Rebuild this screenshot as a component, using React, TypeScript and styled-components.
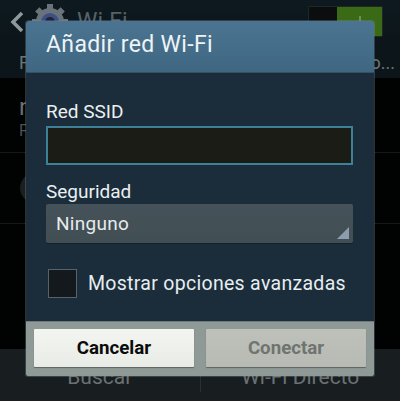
import React, { FC } from "react";
import styled, { createGlobalStyle } from "styled-components";

const GlobalStyle = createGlobalStyle`
  html, body {
    margin: 0;
    padding: 0;
    background: #000;
  }
  body {
    font-family: Roboto, "Noto Sans", sans-serif;
  }
`;

const Screen = styled.div`
  position: relative;
  display: flex;
  flex-direction: column;
  width: 400px;
  height: 401px;
  overflow: hidden;
  background: #010202;
`;

const ActionBar = styled.header`
  display: flex;
  align-items: center;
  height: 47px;
  padding: 0 17px 4px 10px;
  box-sizing: border-box;
  background: linear-gradient(#0e1a20, #0b1419);
`;

const BarTitle = styled.span`
  margin-left: 9px;
  font-size: 23px;
  color: #566266;
`;

const Toggle = styled.div`
  display: flex;
  width: 75px;
  height: 31px;
  margin-left: auto;
  padding: 1px;
  box-sizing: border-box;
  background: #1c2a25;
  border-radius: 2px;
`;

const ToggleOff = styled.div`
  flex: 1;
  background: #0c0d0e;
`;

const ToggleOn = styled.div`
  display: flex;
  flex: 0 0 45px;
  align-items: center;
  justify-content: center;
  background: #3b6a17;
`;

const ToggleMark = styled.i`
  width: 2px;
  height: 12px;
  background: #6b8f55;
`;

const TabStrip = styled.div`
  display: flex;
  justify-content: space-between;
  align-items: center;
  height: 31px;
  padding: 0 5px 0 19px;
  font-size: 18px;
  color: #6d7577;
  background: #0c1519;
`;

const List = styled.div`
  flex: 1;
  display: flex;
  flex-direction: column;
`;

const ListRow = styled.div<{ $height: number }>`
  display: flex;
  flex-direction: column;
  height: ${(p) => p.$height}px;
  padding-left: 19px;
  box-sizing: border-box;
  border-bottom: 1px solid #15191b;
`;

const RowTitle = styled.span`
  margin-top: 15px;
  font-size: 24px;
  line-height: 28px;
  color: #6c7072;
`;

const RowSub = styled.span`
  font-size: 16px;
  line-height: 19px;
  color: #4d5254;
`;

const RoundIcon = styled.span`
  width: 30px;
  height: 30px;
  margin: 20px 0 0 1px;
  border-radius: 50%;
  background: #1c1f20;
`;

const BottomBar = styled.footer`
  display: flex;
  height: 52px;
  background: #181d20;
`;

const BottomItem = styled.div`
  flex: 1;
  display: flex;
  justify-content: center;
  padding-top: 16px;
  font-size: 21px;
  color: #6b7173;
  & + & {
    border-left: 1px solid #2a3033;
    margin: 0 0 9px;
  }
`;

const Dialog = styled.section`
  position: absolute;
  top: 21px;
  left: 26px;
  display: flex;
  flex-direction: column;
  width: 348px;
  height: 355px;
  border-radius: 3px 3px 2px 2px;
  overflow: hidden;
  box-shadow: 0 0 0 1px rgba(120, 140, 150, 0.35);
`;

const DialogHeader = styled.h1`
  display: flex;
  align-items: center;
  flex: 0 0 52px;
  margin: 0;
  padding: 0 0 4px 20px;
  box-sizing: border-box;
  font-size: 23px;
  font-weight: 400;
  letter-spacing: 0.35px;
  color: #eef4f6;
  background: linear-gradient(#4a7491, #3f6782);
  border-bottom: 1px solid #345064;
`;

const DialogBody = styled.div`
  flex: 1;
  display: flex;
  flex-direction: column;
  padding: 27px 21px 0 20px;
  background: #1b2c3b;
`;

const FieldLabel = styled.label`
  font-size: 19px;
  line-height: 24px;
  color: #eaf0f1;
`;

const SsidInput = styled.div`
  height: 39px;
  margin: 2px 0 15px;
  box-sizing: border-box;
  background: #1b1c16;
  border: 2px solid #3d8199;
`;

const Select = styled.div`
  position: relative;
  height: 39px;
  padding: 0 10px;
  display: flex;
  align-items: center;
  font-size: 19px;
  letter-spacing: 0.3px;
  color: #e6ebec;
  background: linear-gradient(#465259, #414e53);
  border-radius: 2px;
  box-shadow: 0 1px 0 #14222c;
`;

const SelectCorner = styled.span`
  position: absolute;
  right: 4px;
  bottom: 4px;
  width: 12px;
  height: 12px;
  background: #8c9db0;
  clip-path: polygon(100% 0, 100% 100%, 0 100%);
`;

const CheckRow = styled.div`
  display: flex;
  align-items: center;
  gap: 11px;
  margin-top: 26px;
  padding-left: 2px;
  font-size: 19.5px;
  letter-spacing: 0.3px;
  white-space: nowrap;
  color: #e6eef0;
`;

const CheckBox = styled.span`
  flex: none;
  width: 29px;
  height: 29px;
  box-sizing: border-box;
  background: #14191d;
  border: 1px solid #56636a;
`;

const DialogActions = styled.div`
  display: flex;
  gap: 12px;
  flex: 0 0 54px;
  padding: 7px 8px 9px;
  box-sizing: border-box;
  background: #8f9996;
  border-top: 1px solid #6f7a7a;
`;

const ActionButton = styled.button<{ $enabled?: boolean }>`
  flex: 1;
  height: 38px;
  padding: 0;
  border: 0;
  border-radius: 1px;
  font-family: inherit;
  font-size: 18.7px;
  font-weight: 700;
  color: ${(p) => (p.$enabled ? "#0a0b0b" : "#6f7470")};
  background: ${(p) =>
    p.$enabled
      ? "linear-gradient(#f3f5f0, #e9ebe6)"
      : "linear-gradient(#bdc1ba, #b7bbb4)"};
  box-shadow: 0 1px 1px #5c6462;
`;

const GearWrap = styled.span`
  display: flex;
  margin-left: 8px;
`;

const BackIcon: FC = () => (
  <svg width="14" height="22" viewBox="0 0 14 22" aria-hidden="true">
    <path d="M12 2 3 11l9 9" fill="none" stroke="#8f999c" strokeWidth="3.5" />
  </svg>
);

const GearIcon: FC = () => (
  <GearWrap>
    <svg width="36" height="36" viewBox="0 0 36 36" aria-hidden="true">
      <g fill="#6a7379">
        <circle cx="18" cy="18" r="14" />
        {[0, 45, 90, 135, 180, 225, 270, 315].map((a) => (
          <rect key={a} x="15" y="0" width="6" height="7" transform={`rotate(${a} 18 18)`} />
        ))}
      </g>
      <circle cx="18" cy="18" r="9" fill="#3d4f86" />
      <circle cx="18" cy="18" r="5" fill="#1d2530" />
    </svg>
  </GearWrap>
);

const App: FC = () => (
  <>
    <GlobalStyle />
    <Screen>
      <ActionBar>
        <BackIcon />
        <GearIcon />
        <BarTitle>Wi-Fi</BarTitle>
        <Toggle>
          <ToggleOff />
          <ToggleOn>
            <ToggleMark />
          </ToggleOn>
        </Toggle>
      </ActionBar>
      <TabStrip>
        <span>F</span>
        <span>o...</span>
      </TabStrip>
      <List>
        <ListRow $height={75}>
          <RowTitle>n</RowTitle>
          <RowSub>F</RowSub>
        </ListRow>
        <ListRow $height={71}>
          <RoundIcon />
        </ListRow>
      </List>
      <BottomBar>
        <BottomItem>Buscar</BottomItem>
        <BottomItem>Wi-Fi Directo</BottomItem>
      </BottomBar>
      <Dialog>
        <DialogHeader>Añadir red Wi-Fi</DialogHeader>
        <DialogBody>
          <FieldLabel>Red SSID</FieldLabel>
          <SsidInput />
          <FieldLabel>Seguridad</FieldLabel>
          <Select>
            Ninguno
            <SelectCorner />
          </Select>
          <CheckRow>
            <CheckBox />
            Mostrar opciones avanzadas
          </CheckRow>
        </DialogBody>
        <DialogActions>
          <ActionButton $enabled>Cancelar</ActionButton>
          <ActionButton>Conectar</ActionButton>
        </DialogActions>
      </Dialog>
    </Screen>
  </>
);

export default App;
